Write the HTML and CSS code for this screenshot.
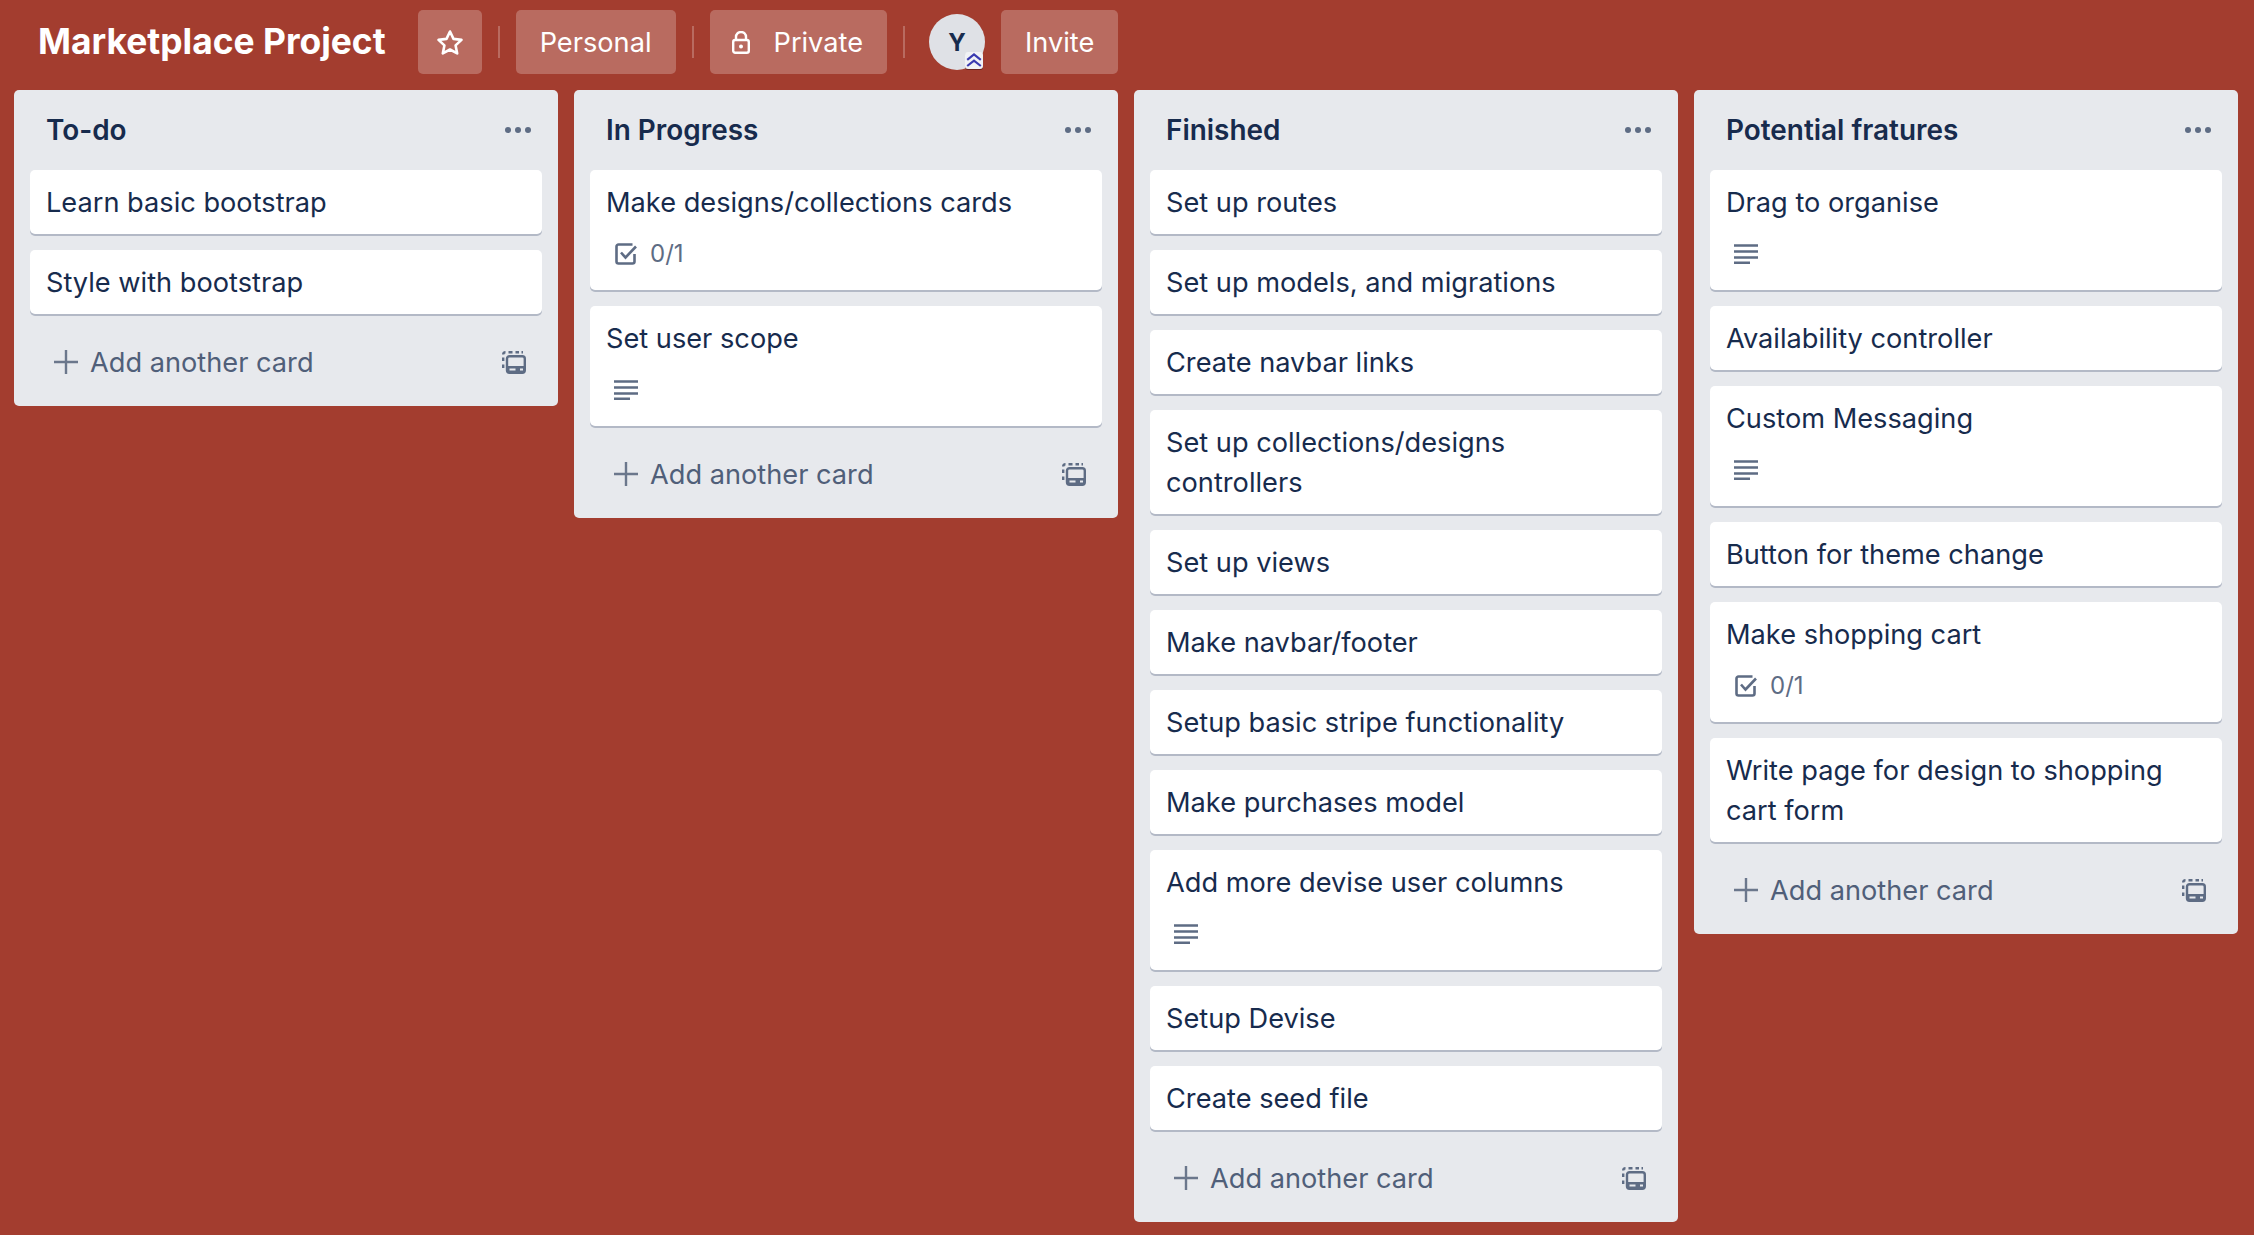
FILE: index.html
```html
<!DOCTYPE html>
<html lang="en">
<head>
    <meta charset="UTF-8">
    <meta name="viewport" content="width=device-width, initial-scale=1.0">
    <title>Marketplace Project</title>
    <link rel="stylesheet" href="styles.css">
</head>
<body>

<svg class="icon-defs" width="0" height="0">
    <symbol id="icon-check" viewBox="0 0 22 22">
        <path d="M19.5 11v7.5a2 2 0 0 1-2 2h-14a2 2 0 0 1-2-2v-15a2 2 0 0 1 2-2h14" fill="none" stroke="currentColor" stroke-width="2.6"/>
        <path d="M6 9.5l4.5 5L21 3.5" fill="none" stroke="currentColor" stroke-width="2.6"/>
    </symbol>
    <symbol id="icon-desc" viewBox="0 0 24 20">
        <path d="M0 1.5h24M0 7.5h24M0 13.5h24M0 18.7h16" fill="none" stroke="currentColor" stroke-width="2.6"/>
    </symbol>
    <symbol id="icon-plus" viewBox="0 0 24 24">
        <path d="M12 0v24M0 12h24" fill="none" stroke="currentColor" stroke-width="2.4"/>
    </symbol>
    <symbol id="icon-template" viewBox="0 0 24 23">
        <path d="M1.200 17v-3.500M1.200 10V6.500M1.200 3.500a2.300 2.300 0 0 1 2.300-2.300M6.500 1.200h4M13.500 1.200h3.500M19.500 1.200h1.500" fill="none" stroke="currentColor" stroke-width="2.400"/>
        <rect x="5" y="5.200" width="17.800" height="16.600" rx="2.500" fill="none" stroke="currentColor" stroke-width="2.400"/>
        <path d="M5 15h18v5a2 2 0 0 1-2 2H7a2 2 0 0 1-2-2z" fill="currentColor"/>
        <path d="M7.500 18.500h6M18 18.500h3" fill="none" stroke="#e7e9ed" stroke-width="2"/>
    </symbol>
</svg>

<header class="board-header">
    <h1 class="board-title">Marketplace Project</h1>
    <button class="header-btn star-btn">
        <svg width="28" height="27" viewBox="0 0 28 27"><path d="M14 2.500l3.500 7.400 8 1-5.900 5.500 1.600 8L14 20.500l-7.200 3.900 1.600-8L2.500 10.900l8-1z" fill="none" stroke="#fff" stroke-width="2.600" stroke-linejoin="round"/></svg>
    </button>
    <span class="header-sep"></span>
    <button class="header-btn">Personal</button>
    <span class="header-sep"></span>
    <button class="header-btn private-btn">
        <svg width="18" height="23" viewBox="0 0 18 23"><path d="M4 9V6a5 5 0 0 1 10 0v3" fill="none" stroke="#fff" stroke-width="2.400"/><rect x="1.200" y="9" width="15.600" height="12.800" rx="2" fill="none" stroke="#fff" stroke-width="2.400"/><circle cx="9" cy="15.400" r="2" fill="#fff"/></svg>
        Private
    </button>
    <span class="header-sep"></span>
    <div class="avatar">
        Y
        <span class="avatar-badge">
            <svg width="16" height="15" viewBox="0 0 16 15"><path d="M1.200 6.800L8 1.500l6.800 5.300M1.200 13L8 7.700 14.800 13" fill="none" stroke="#3a3ab0" stroke-width="2.200"/></svg>
        </span>
    </div>
    <button class="header-btn">Invite</button>
</header>

<main class="board">

    <section class="list">
        <div class="list-head">
            <h2 class="list-title">To-do</h2>
            <span class="list-menu"><i></i><i></i><i></i></span>
        </div>
        <div class="cards">
            <div class="card">Learn basic bootstrap</div>
            <div class="card">Style with bootstrap</div>
        </div>
        <div class="list-foot">
            <svg class="plus-icon"><use href="#icon-plus"/></svg>
            <span class="add-label">Add another card</span>
            <svg class="template-icon"><use href="#icon-template"/></svg>
        </div>
    </section>

    <section class="list">
        <div class="list-head">
            <h2 class="list-title">In Progress</h2>
            <span class="list-menu"><i></i><i></i><i></i></span>
        </div>
        <div class="cards">
            <div class="card">Make designs/collections cards
                <div class="card-meta"><svg class="check-icon"><use href="#icon-check"/></svg><span>0/1</span></div>
            </div>
            <div class="card">Set user scope
                <div class="card-meta"><svg class="desc-icon"><use href="#icon-desc"/></svg></div>
            </div>
        </div>
        <div class="list-foot">
            <svg class="plus-icon"><use href="#icon-plus"/></svg>
            <span class="add-label">Add another card</span>
            <svg class="template-icon"><use href="#icon-template"/></svg>
        </div>
    </section>

    <section class="list">
        <div class="list-head">
            <h2 class="list-title">Finished</h2>
            <span class="list-menu"><i></i><i></i><i></i></span>
        </div>
        <div class="cards">
            <div class="card">Set up routes</div>
            <div class="card">Set up models, and migrations</div>
            <div class="card">Create navbar links</div>
            <div class="card">Set up collections/designs controllers</div>
            <div class="card">Set up views</div>
            <div class="card">Make navbar/footer</div>
            <div class="card">Setup basic stripe functionality</div>
            <div class="card">Make purchases model</div>
            <div class="card">Add more devise user columns
                <div class="card-meta"><svg class="desc-icon"><use href="#icon-desc"/></svg></div>
            </div>
            <div class="card">Setup Devise</div>
            <div class="card">Create seed file</div>
        </div>
        <div class="list-foot">
            <svg class="plus-icon"><use href="#icon-plus"/></svg>
            <span class="add-label">Add another card</span>
            <svg class="template-icon"><use href="#icon-template"/></svg>
        </div>
    </section>

    <section class="list">
        <div class="list-head">
            <h2 class="list-title">Potential fratures</h2>
            <span class="list-menu"><i></i><i></i><i></i></span>
        </div>
        <div class="cards">
            <div class="card">Drag to organise
                <div class="card-meta"><svg class="desc-icon"><use href="#icon-desc"/></svg></div>
            </div>
            <div class="card">Availability controller</div>
            <div class="card">Custom Messaging
                <div class="card-meta"><svg class="desc-icon"><use href="#icon-desc"/></svg></div>
            </div>
            <div class="card">Button for theme change</div>
            <div class="card">Make shopping cart
                <div class="card-meta"><svg class="check-icon"><use href="#icon-check"/></svg><span>0/1</span></div>
            </div>
            <div class="card">Write page for design to shopping cart form</div>
        </div>
        <div class="list-foot">
            <svg class="plus-icon"><use href="#icon-plus"/></svg>
            <span class="add-label">Add another card</span>
            <svg class="template-icon"><use href="#icon-template"/></svg>
        </div>
    </section>

</main>

</body>
</html>
```

FILE: styles.css
```css
* {
    box-sizing: border-box;
}
body {
    margin: 0;
    height: 1235px;
    overflow: hidden;
    font-family: Inter, "Noto Sans", sans-serif;
    background-color: #a33d2f;
    color: #172b4d;
}
.icon-defs {
    position: absolute;
}

/* header */
.board-header {
    display: flex;
    align-items: center;
    height: 90px;
    padding: 0 0 6px 38px;
}
.board-title {
    margin: 0 32px 2px 0;
    font-size: 35.4px;
    font-weight: 700;
    color: #fff;
    white-space: nowrap;
}
.header-btn {
    display: flex;
    align-items: center;
    height: 64px;
    padding: 0 24px;
    border: 0;
    border-radius: 5px;
    background: rgba(255, 255, 255, 0.24);
    color: #fff;
    font-family: inherit;
    font-size: 27.2px;
}
.star-btn {
    justify-content: center;
    width: 64px;
    padding: 0;
}
.private-btn {
    padding-left: 22px;
    gap: 24px;
}
.header-sep {
    width: 2px;
    height: 32px;
    margin: 0 16px;
    background: rgba(255, 255, 255, 0.24);
}
.avatar {
    position: relative;
    display: flex;
    align-items: center;
    justify-content: center;
    width: 56px;
    height: 56px;
    margin: 0 16px 0 8px;
    border-radius: 50%;
    background: #dfe1e6;
    font-size: 24px;
    font-weight: 700;
}
.avatar-badge {
    position: absolute;
    right: 2px;
    bottom: 1px;
    display: flex;
    align-items: center;
    justify-content: center;
    width: 18px;
    height: 17px;
    border-radius: 3px;
    background: #f1f2f5;
    box-shadow: 0 1px 0 rgba(70, 20, 20, 0.6);
}

/* lists */
.board {
    display: flex;
    align-items: flex-start;
    gap: 16px;
    padding-left: 14px;
}
.list {
    flex: 0 0 544px;
    padding: 0 16px;
    border-radius: 5px;
    background: #e7e9ed;
}
.list-head {
    display: flex;
    align-items: center;
    justify-content: space-between;
    height: 80px;
    padding: 0 11px 0 16px;
}
.list-title {
    margin: 0;
    font-size: 27.9px;
    font-weight: 600;
}
.list-menu {
    display: flex;
    gap: 4px;
}
.list-menu i {
    width: 6px;
    height: 6px;
    border-radius: 50%;
    background: #5e6c84;
}
.cards {
    display: flex;
    flex-direction: column;
    gap: 16px;
}
.card {
    padding: 13px 24px 11px 16px;
    border-radius: 5px;
    background: #fff;
    box-shadow: 0 2px 0 #b3b9c6;
    font-size: 27.2px;
    line-height: 40px;
}
.card-meta {
    display: flex;
    align-items: center;
    gap: 13px;
    height: 56px;
    margin: 3px 0 -3px 8px;
    color: #5e6c84;
    font-size: 24px;
}
.check-icon {
    width: 22px;
    height: 22px;
    margin-left: 1px;
}
.desc-icon {
    width: 24px;
    height: 20px;
}
.list-foot {
    display: flex;
    align-items: center;
    height: 92px;
    padding: 4px 16px 0 24px;
    color: #505f79;
}
.plus-icon {
    width: 24px;
    height: 24px;
    margin-right: 12px;
    color: #6b778c;
}
.add-label {
    flex: 1;
    font-size: 27.2px;
}
.template-icon {
    width: 24px;
    height: 23px;
    color: #5e6c84;
}
```
